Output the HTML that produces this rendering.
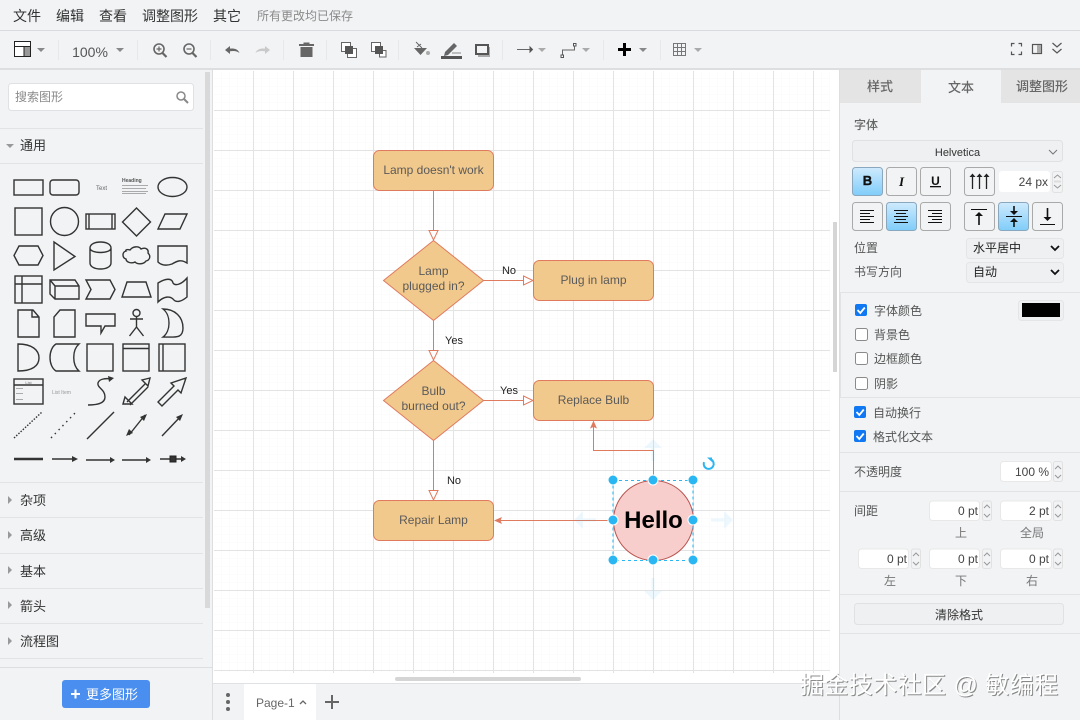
<!DOCTYPE html>
<html><head><meta charset="utf-8">
<style>
html,body{margin:0;padding:0;width:1080px;height:720px;overflow:hidden;background:#f1f3f4}
svg{position:absolute;left:0;top:0;display:block}
text{font-family:"Liberation Sans","Noto Sans CJK SC",sans-serif}
.m{font-size:14px;fill:#333}
.s{font-size:13px;fill:#333}
.l{font-size:12px;fill:#555}
.d{font-size:12px;fill:#5a5a5a;text-anchor:middle}
.e{font-size:11px;fill:#222;text-anchor:middle}
.n{font-size:12px;fill:#444;text-anchor:end}
.c{font-size:12px;fill:#777;text-anchor:middle}
.i{fill:#666}
.sh{fill:none;stroke:#333;stroke-width:1.4}
.line{fill:#e1e3e5}
.btn{fill:#f1f3f4;stroke:#a9a9a9;stroke-width:1}
.on{fill:url(#blue);stroke:#8aa8bd;stroke-width:1}
.inp{fill:#fff;stroke:#e8e8e8}
.sp{fill:#f1f3f4;stroke:#e1e1e1}
.cb{fill:#fff;stroke:#8a8a8a;stroke-width:1}
.cbon{fill:#0f78f2}
.edge{fill:none;stroke:#e07a5f;stroke-width:1}
.hov{fill:#29b6f2;opacity:.09}
.h{fill:#29b6f2;stroke:#fff;stroke-width:1}
</style></head>
<body>
<svg width="1080" height="720" viewBox="0 0 1080 720" xmlns="http://www.w3.org/2000/svg">
<defs>
<linearGradient id="blue" x1="0" y1="0" x2="0" y2="1"><stop offset="0" stop-color="#cfeafd"/><stop offset="1" stop-color="#7fcdfa"/></linearGradient>
<pattern id="minor" x="213" y="70" width="8" height="8" patternUnits="userSpaceOnUse"><path d="M.5 0V8M0 .5H8" fill="none" stroke="#fcfcfc" stroke-width="1"/></pattern>
<pattern id="major" x="213" y="70" width="40" height="40" patternUnits="userSpaceOnUse"><path d="M.5 0V40M0 .5H40" fill="none" stroke="#e3e3e3" stroke-width="1"/></pattern>
</defs>

<rect width="1080" height="720" fill="#f1f3f4"/>

<!-- canvas -->
<rect x="213" y="70" width="627" height="613" fill="#fff"/>
<rect x="213" y="70" width="617" height="603" fill="url(#minor)"/>
<rect x="213" y="70" width="617" height="603" fill="url(#major)"/>
<rect x="213" y="70" width="617" height="1" fill="#fff"/>
<rect x="213" y="70" width="1" height="603" fill="#fff"/>
<rect x="833" y="222" width="4" height="150" fill="#d5d5d5"/>
<rect x="395" y="677" width="186" height="4" rx="2" fill="#d5d5d5"/>

<!-- menu & toolbar -->
<rect y="30" width="1080" height="1" fill="#d8dadd"/>
<rect y="68" width="1080" height="2" fill="#dcdee0"/>
<text class="m" x="13" y="21">文件</text>
<text class="m" x="56" y="21">编辑</text>
<text class="m" x="99" y="21">查看</text>
<text class="m" x="142" y="21">调整图形</text>
<text class="m" x="213" y="21">其它</text>
<text x="257" y="20" font-size="12" fill="#8a8a8a">所有更改均已保存</text>

<g fill="#e6e8ea">
<rect x="58" y="40" width="1" height="20"/><rect x="137" y="40" width="1" height="20"/><rect x="210" y="40" width="1" height="20"/><rect x="283" y="40" width="1" height="20"/><rect x="326" y="40" width="1" height="20"/><rect x="398" y="40" width="1" height="20"/><rect x="502" y="40" width="1" height="20"/><rect x="603" y="40" width="1" height="20"/><rect x="660" y="40" width="1" height="20"/>
</g>
<!-- layout icon -->
<rect x="14.500" y="41.500" width="16" height="15" fill="#fff" stroke="#222"/>
<rect x="24" y="47" width="6" height="9" fill="#999"/>
<path d="M14 46.500H31M24 47V56" stroke="#222" fill="none"/>
<path d="M37 48h8l-4 4z" fill="#888"/>
<text x="90" y="57" font-size="14" fill="#555" text-anchor="middle">100%</text>
<path d="M116 48h8l-4 4z" fill="#888"/>
<!-- zoom icons -->
<g fill="none" stroke="#666" stroke-width="1.600">
<circle cx="159" cy="49" r="5"/><path d="M162.500 53l4 4" stroke-width="2.200"/><path d="M156.500 49h5M159 46.500v5" stroke-width="1.200"/>
<circle cx="189" cy="49" r="5"/><path d="M192.500 53l4 4" stroke-width="2.200"/><path d="M186.500 49h5" stroke-width="1.200"/>
</g>
<!-- undo/redo -->
<path d="M225 50l5-4v2.600c4.500-.4 8 .6 9.500 4.400-2.500-2-5.500-2.300-9.500-1.700V54z" fill="#666"/>
<path d="M270 50l-5-4v2.600c-4.500-.4-8 .6-9.500 4.400 2.500-2 5.500-2.300 9.500-1.700V54z" fill="#c9c9c9"/>
<!-- trash -->
<path d="M299 44h4.500v-1.500h6V44h4.500v2h-15zM300.500 47h12v10h-12z" fill="#666"/>
<!-- to front / back -->
<rect x="341.500" y="42.500" width="9" height="9" fill="#fff" stroke="#666"/><rect x="347.500" y="48.500" width="9" height="9" fill="#fff" stroke="#666"/><rect x="345" y="46" width="8" height="8" fill="#555"/>
<rect x="371.500" y="42.500" width="9" height="9" fill="#fff" stroke="#666"/><rect x="379.500" y="50.500" width="6.500" height="6.500" fill="#fff" stroke="#666"/><rect x="375" y="46" width="8" height="8" fill="#555"/>
<!-- fill -->
<path d="M414 48h13l-6.500 7z" fill="#666"/><path d="M416 42l6 6M417 47l4-3" stroke="#666" fill="none"/><circle cx="428" cy="53" r="2" fill="#aaa"/>
<!-- pen -->
<path d="M445 52l9-9 3 3-9 9-4 1z" fill="#666"/><rect x="452" y="52.500" width="9" height="1" fill="#888"/><rect x="441" y="56" width="21" height="3" fill="#555"/>
<!-- shadow -->
<rect x="478" y="47" width="12" height="10" fill="#aaa"/><rect x="476" y="45" width="12" height="9" fill="#f1f3f4" stroke="#555" stroke-width="2"/>
<!-- connection -->
<path d="M517 49.500H531" stroke="#666" fill="none"/><path d="M530 47l2.500 2.500-2.500 2.500z" fill="#555" stroke="#555"/>
<path d="M538 48h8l-4 4z" fill="#aaa"/>
<path d="M562.500 55.500V50H574.500V45.500" stroke="#666" fill="none"/><rect x="561" y="55" width="2.500" height="2.500" fill="#fff" stroke="#555"/><rect x="573.500" y="43.500" width="2.500" height="2.500" fill="#fff" stroke="#555"/>
<path d="M582 48h8l-4 4z" fill="#aaa"/>
<!-- plus -->
<path d="M618 48h5v-5h3v5h5v3h-5v5h-3v-5h-5z" fill="#000"/>
<path d="M639 48h8l-4 4z" fill="#888"/>
<!-- table -->
<g fill="none" stroke="#777"><rect x="673.500" y="43.500" width="12" height="12"/><path d="M677.500 43.500v12M681.500 43.500v12M673.500 47.500h12M673.500 51.500h12"/></g>
<path d="M694 48h8l-4 4z" fill="#aaa"/>
<!-- right icons -->
<g fill="none" stroke="#555" stroke-width="1.200">
<path d="M1011.500 46.500v-3h3M1018.500 43.500h3v3M1021.500 51.500v3h-3M1014.500 54.500h-3v-3"/>
<rect x="1032.500" y="44.500" width="9" height="9"/>
<path d="M1052.500 43l4.500 4 4.500-4M1052.500 49l4.500 4 4.500-4"/>
</g>
<rect x="1037" y="45" width="4" height="8" fill="#aaa"/>

<!-- left sidebar -->
<rect x="212" y="70" width="1" height="650" fill="#dcdee0"/>
<rect x="205" y="72" width="5" height="536" fill="#d9d9d9"/>
<rect x="8.500" y="83.500" width="185" height="27" rx="3" fill="#fff" stroke="#dfe1e4"/>
<text x="15" y="101" font-size="12" fill="#8a8a8a">搜索图形</text>
<circle cx="181" cy="96" r="4" fill="none" stroke="#888" stroke-width="1.500"/><path d="M184 99l4 4" stroke="#888" stroke-width="2"/>
<rect y="128" width="203" height="1" class="line"/>
<rect y="163" width="203" height="1" class="line"/>
<path d="M6 144h8l-4 4z" fill="#999"/>
<text class="s" x="20" y="150">通用</text>

<!-- shapes -->
<g class="sh">
<rect x="14" y="180" width="29" height="15"/>
<rect x="50" y="180" width="29" height="15" rx="3"/>
<ellipse cx="172.500" cy="187" rx="14.500" ry="9.500"/>
<rect x="15" y="208" width="27" height="27"/>
<circle cx="64.500" cy="221.500" r="14"/>
<rect x="86" y="214" width="29" height="15"/><path d="M89 214v15M112 214v15"/>
<path d="M136.500 208l14 14-14 14-14-14z"/>
<path d="M165 214h22l-7 15h-22z"/>
<path d="M19 246h19l5 9.500-5 9.500H19l-5-9.500z"/>
<path d="M54 242l21 14.500L54 270z"/>
<path d="M90 248c0-8 21-8 21 0v15c0 8-21 8-21 0zM90 248c0 6 21 6 21 0"/>
<path d="M130 250c3-4 9-4 11-1 4-2 8 0 7 4 3 3 2 7-2 8-2 3-8 4-11 1-4 2-9 0-9-3-4-1-4-7 0-8-1-1 1-2 4-1z"/>
<path d="M158 246h29v17c-6-4-10-2-15 1-6 2-11 1-14-2z"/>
<rect x="15" y="276" width="27" height="27"/><path d="M22 276v27M15 284h27"/>
<path d="M50 280h25l4 6v13H55l-5-5zM50 280l5 6h24M55 286v13"/>
<path d="M86 280h24l5 9.500-5 9.500H86l5-9.500z"/>
<path d="M127 282h19l5 15h-29z"/>
<path d="M158 283c8-5 14-5 15 0 2 3 8 2 14-5v19c-6 5-11 6-14 2-3-3-9-3-15 3z"/>
<path d="M18 310h15l6 7v20H18zM32 310v7h7"/>
<path d="M60 310h15v27H54v-20z"/>
<path d="M86 314h29v12h-10l-4 7 0-7H86z"/>
<circle cx="136.500" cy="313" r="3.500"/><path d="M136.500 316.500V327M130 319h13M136.500 327l-7 9M136.500 327l7 9"/>
<path d="M163 309c12 0 20 8 20 19s-8 9-20 9c8-6 8-22 0-28z"/>
<path d="M18 344c14 0 21 6 21 14s-7 13-21 13z"/>
<path d="M56 344h23c-7 6-7 21 0 27H56c-8-5-8-22 0-27z"/>
<rect x="87" y="344" width="26" height="27"/>
<rect x="123" y="344" width="26" height="27"/><path d="M123 348.500h26"/>
<rect x="159" y="344" width="26" height="27"/><path d="M163 344v27"/>
<rect x="14" y="379" width="29" height="25"/><path d="M14 385h29"/>
<path d="M88 405c8 0 17-1 17-8 0-8-8-9-7-14 1-4 7-5 14-4"/>
<path d="M127 402l18-18M130 405l18-18M123 404l2-7 7 7zM150 378l-8 2 6 6z" />
<path d="M158 402l16-16-3-3 15-5-5 15-3-3-16 16z"/>
<path d="M14 438l28-26" stroke-dasharray="1.500 1.500"/>
<path d="M51 438l25-26" stroke-dasharray="1.500 4"/>
<path d="M87 439l27-27"/>
<path d="M129 435l16-20"/>
<path d="M162 436l19-20"/>
<path d="M14 459h29" stroke-width="2.400"/>
<path d="M52 459h24"/>
<path d="M86 460h27"/>
<path d="M122 460h27"/>
<path d="M160 459h24"/>
</g>
<g fill="#333">
<path d="M114 378l-6-2 1 6zM126 436l7-3-4-4zM147 414l-7 3 4 4zM183 414l-7 3 4 4zM78 459l-6-3v6zM115 460l-5-3v6zM151 460l-5-3v6zM186 459l-5-3v6z"/>
<rect x="170" y="456" width="6" height="6" stroke="#222"/>
</g>
<text x="96" y="190" font-size="6" fill="#666">Text</text>
<text x="122" y="182" font-size="5" font-weight="bold" fill="#555">Heading</text>
<g fill="#aaa"><rect x="122" y="185" width="26" height="1"/><rect x="122" y="188" width="24" height="1"/><rect x="122" y="191" width="26" height="1"/><rect x="122" y="193" width="24" height="1"/></g>
<text x="52" y="394" font-size="5" fill="#999">List Item</text>
<text x="28.500" y="384" font-size="4" fill="#777" text-anchor="middle">List</text>
<g fill="#aaa"><rect x="16" y="388" width="7" height="1"/><rect x="16" y="393" width="7" height="1"/><rect x="16" y="399" width="7" height="1"/></g>

<!-- categories -->
<rect y="482" width="203" height="1" class="line"/>
<rect y="517" width="203" height="1" class="line"/>
<rect y="553" width="203" height="1" class="line"/>
<rect y="588" width="203" height="1" class="line"/>
<rect y="623" width="203" height="1" class="line"/>
<rect y="658" width="203" height="1" class="line"/>
<g fill="#999">
<path d="M8 496l4 4-4 4zM8 531l4 4-4 4zM8 566l4 4-4 4zM8 601l4 4-4 4zM8 637l4 4-4 4z"/>
</g>
<text class="s" x="20" y="505">杂项</text>
<text class="s" x="20" y="540">高级</text>
<text class="s" x="20" y="576">基本</text>
<text class="s" x="20" y="611">箭头</text>
<text class="s" x="20" y="646">流程图</text>
<rect y="667" width="212" height="53" fill="#f1f3f4"/>
<rect y="667" width="212" height="1" fill="#dcdee0"/>
<rect x="62" y="680" width="88" height="28" rx="3" fill="#4a8ff0"/>
<path d="M71 694h9M75.500 689.500v9" stroke="#fff" stroke-width="2" fill="none"/>
<text x="86" y="699" font-size="13" fill="#fff">更多图形</text>

<!-- page tabs -->
<rect x="213" y="683" width="627" height="37" fill="#f1f3f4"/>
<rect x="213" y="683" width="627" height="1" fill="#dfe1e4"/>
<rect x="244" y="684" width="72" height="36" fill="#fff"/>
<g fill="#666"><circle cx="228" cy="695" r="2"/><circle cx="228" cy="702" r="2"/><circle cx="228" cy="709" r="2"/></g>
<text x="256" y="707" font-size="12" fill="#666">Page-1</text>
<path d="M300 704l3-3 3 3" fill="none" stroke="#666" stroke-width="1.300"/>
<path d="M332 695v14M325 702h14" stroke="#666" stroke-width="2" fill="none"/>

<!-- diagram -->
<g fill="#f2c98c" stroke="#e07a5f">
<rect x="373.500" y="150.500" width="120" height="40" rx="6"/>
<path d="M433.500 240.500l50 40-50 40-50-40z"/>
<rect x="533.500" y="260.500" width="120" height="40" rx="6"/>
<path d="M433.500 360.500l50 40-50 40-50-40z"/>
<rect x="533.500" y="380.500" width="120" height="40" rx="6"/>
<rect x="373.500" y="500.500" width="120" height="40" rx="6"/>
</g>
<path class="edge" d="M433.500 190.500V230M483.500 280.500H523M433.500 320.500V350M483.500 400.500H523M433.500 440.500V490M613 520.500H500M653.500 480V450.500H593.500V427"/>
<g fill="#fff" stroke="#e07a5f">
<path d="M429 230.500h9l-4.500 9.500z"/>
<path d="M523.500 276l9.500 4.500-9.500 4.500z"/>
<path d="M429 350.500h9l-4.500 9.500z"/>
<path d="M523.500 396l9.500 4.500-9.500 4.500z"/>
<path d="M429 490.500h9l-4.500 9.500z"/>
</g>
<g fill="#e07a5f">
<path d="M494 520.500l8-3.500-1.500 3.500 1.500 3.500z"/>
<path d="M593.500 420.500l3.500 8-3.500-1.500-3.500 1.500z"/>
</g>
<text class="d" x="433.500" y="174">Lamp doesn't work</text>
<text class="d" x="433.500" y="275">Lamp</text>
<text class="d" x="433.500" y="290">plugged in?</text>
<text class="d" x="593.500" y="284">Plug in lamp</text>
<text class="d" x="433.500" y="395">Bulb</text>
<text class="d" x="433.500" y="410">burned out?</text>
<text class="d" x="593.500" y="404">Replace Bulb</text>
<text class="d" x="433.500" y="524">Repair Lamp</text>
<text class="e" x="509" y="274">No</text>
<text class="e" x="454" y="344">Yes</text>
<text class="e" x="509" y="394">Yes</text>
<text class="e" x="454" y="484">No</text>
<circle cx="653.500" cy="520.500" r="40" fill="#f8cecc" stroke="#b85450"/>
<text x="653.500" y="528" font-size="24" font-weight="bold" fill="#000" text-anchor="middle">Hello</text>
<!-- hover arrows -->
<path class="hov" d="M653 439l9 9h-7.500v13h-3v-13h-7.500z"/>
<path class="hov" d="M653 600l9-9h-7.500v-13h-3v13h-7.500z"/>
<path class="hov" d="M574 520l9-9v7.500h13v3h-13v7.500z"/>
<path class="hov" d="M733 520l-9-9v7.500h-13v3h13v7.500z"/>
<!-- selection -->
<rect x="613" y="480.500" width="80" height="80" fill="none" stroke="#29b6f2" stroke-dasharray="3 3"/>
<circle class="h" cx="613" cy="480" r="5"/><circle class="h" cx="653" cy="480" r="5"/><circle class="h" cx="693" cy="480" r="5"/>
<circle class="h" cx="613" cy="520" r="5"/><circle class="h" cx="693" cy="520" r="5"/>
<circle class="h" cx="613" cy="560" r="5"/><circle class="h" cx="653" cy="560" r="5"/><circle class="h" cx="693" cy="560" r="5"/>
<path d="M705 460.500a5 5 0 1 0 7.500 0" fill="none" stroke="#29b6f2" stroke-width="2" transform="rotate(-20 709 464)"/>
<path d="M707 457.500h5v4.500z" fill="#29b6f2"/>

<!-- right panel -->
<rect x="839" y="70" width="241" height="650" fill="#f1f3f4"/>
<rect x="839" y="70" width="1" height="650" fill="#dcdee0"/>
<rect x="840" y="70" width="81" height="33" fill="#e4e4e4"/>
<rect x="1001" y="70" width="79" height="33" fill="#e4e4e4"/>
<text x="880" y="91" font-size="13" font-weight="500" fill="#666" text-anchor="middle">样式</text>
<text x="961" y="92" font-size="13" font-weight="500" fill="#666" text-anchor="middle">文本</text>
<text x="1042" y="91" font-size="13" font-weight="500" fill="#666" text-anchor="middle">调整图形</text>
<text x="854" y="129" font-size="12" font-weight="500" fill="#666">字体</text>
<rect x="852.500" y="140.500" width="210" height="21" rx="3" fill="#eef0f1" stroke="#dfe1e3"/>
<text x="957.500" y="156" font-size="11" fill="#333" text-anchor="middle">Helvetica</text>
<path d="M1049 150l4 4 4-4" fill="none" stroke="#777"/>

<rect class="on" x="852.500" y="167.500" width="30" height="28" rx="3"/>
<rect class="btn" x="886.500" y="167.500" width="30" height="28" rx="3"/>
<rect class="btn" x="920.500" y="167.500" width="30" height="28" rx="3"/>
<rect class="btn" x="964.500" y="167.500" width="30" height="28" rx="3"/>
<text x="867.500" y="185" font-size="13" font-weight="bold" fill="#111" text-anchor="middle" stroke="#111" stroke-width=".4">B</text>
<text x="901.500" y="186" font-size="13" font-weight="bold" font-style="italic" fill="#111" text-anchor="middle" style="font-family:'Liberation Serif',serif">I</text>
<text x="935.500" y="185" font-size="12" font-weight="bold" fill="#111" text-anchor="middle">U</text>
<rect x="930" y="186" width="11" height="1.300" fill="#111"/>
<g stroke="#222" fill="none" stroke-width="1.300"><path d="M972.500 175v14M979.500 175v14M986.500 175v14"/></g>
<path d="M969.500 177l3-3.500 3 3.500zM976.500 177l3-3.500 3 3.500zM983.500 177l3-3.500 3 3.500z" fill="#222"/>
<rect x="999" y="171" width="51" height="21" rx="3" fill="#fff"/>
<text class="n" x="1048" y="186">24 px</text>
<rect class="sp" x="1052.500" y="171.500" width="10" height="21" rx="2"/>
<path d="M1054 178l3.500-3 3.500 3M1054 185l3.500 3 3.500-3" fill="none" stroke="#999"/>
<path d="M1054 181h7M1054 182h7" stroke="#ddd" fill="none"/>

<rect class="btn" x="852.500" y="202.500" width="30" height="28" rx="3"/>
<rect class="on" x="886.500" y="202.500" width="30" height="28" rx="3"/>
<rect class="btn" x="920.500" y="202.500" width="30" height="28" rx="3"/>
<rect class="btn" x="964.500" y="202.500" width="30" height="28" rx="3"/>
<rect class="on" x="998.500" y="202.500" width="30" height="28" rx="3"/>
<rect class="btn" x="1032.500" y="202.500" width="30" height="28" rx="3"/>
<g stroke="#111" fill="none" stroke-width="1">
<path d="M860 210.500h14M860 213.500h10M860 216.500h14M860 219.500h10M860 222.500h14"/>
<path d="M894 210.500h14M896 213.500h10M894 216.500h14M896 219.500h10M894 222.500h14"/>
<path d="M928 210.500h14M932 213.500h10M928 216.500h14M932 219.500h10M928 222.500h14"/>
<path d="M971 209.500h16M1006 216.500h16M1040 224.500h15"/>
</g>
<g stroke="#111" fill="none" stroke-width="1.600"><path d="M979 215v10M1014 206v6M1014 221v6M1047.500 208v10"/></g>
<g fill="#111">
<path d="M975 216l4-4 4 4zM1010 211h8l-4 4zM1010 222l4-4 4 4zM1043.500 217h8l-4 4z"/>
</g>

<text class="l" x="854" y="252">位置</text>
<rect x="966.500" y="238.500" width="97" height="20" rx="3" fill="#eef0f1" stroke="#e3e5e6"/>
<text x="973" y="252" font-size="12" fill="#222">水平居中</text>
<path d="M1051 246l4 4 4-4" fill="none" stroke="#111" stroke-width="1.800"/>
<text class="l" x="854" y="276">书写方向</text>
<rect x="966.500" y="262.500" width="97" height="20" rx="3" fill="#eef0f1" stroke="#e3e5e6"/>
<text x="973" y="276" font-size="12" fill="#222">自动</text>
<path d="M1051 270l4 4 4-4" fill="none" stroke="#111" stroke-width="1.800"/>

<rect x="840" y="292" width="240" height="1" class="line"/>
<rect x="840" y="397" width="240" height="1" class="line"/>
<rect x="840" y="293" width="1" height="104" class="line"/>
<rect x="855" y="304" width="12" height="12" rx="2" class="cbon"/>
<path d="M857.500 310l2.800 3 4.500-5.500" fill="none" stroke="#fff" stroke-width="1.800"/>
<rect x="855.500" y="328.500" width="12" height="12" rx="2" class="cb"/>
<rect x="855.500" y="352.500" width="12" height="12" rx="2" class="cb"/>
<rect x="855.500" y="377.500" width="12" height="12" rx="2" class="cb"/>
<text class="l" x="874" y="315">字体颜色</text>
<text class="l" x="874" y="339">背景色</text>
<text class="l" x="874" y="363">边框颜色</text>
<text class="l" x="874" y="388">阴影</text>
<rect x="1018.500" y="300.500" width="45" height="20" rx="3" fill="#eef0f1" stroke="#e3e5e6"/>
<rect x="1022" y="303" width="38" height="14" fill="#000"/>

<rect x="854" y="406" width="12" height="12" rx="2" class="cbon"/>
<path d="M856.500 412l2.800 3 4.500-5.500" fill="none" stroke="#fff" stroke-width="1.800"/>
<rect x="854" y="430" width="12" height="12" rx="2" class="cbon"/>
<path d="M856.500 436l2.800 3 4.500-5.500" fill="none" stroke="#fff" stroke-width="1.800"/>
<text class="l" x="873" y="417">自动换行</text>
<text class="l" x="873" y="441">格式化文本</text>
<rect x="840" y="452" width="240" height="1" class="line"/>

<text class="l" x="854" y="476">不透明度</text>
<rect class="inp" x="1000.500" y="461.500" width="51" height="20" rx="3"/>
<text class="n" x="1049" y="476">100 %</text>
<g id="sp1">
<rect class="sp" x="1053.500" y="461.500" width="9" height="20" rx="2"/>
<path d="M1055 469l3-3 3 3M1055 475l3 3 3-3" fill="none" stroke="#999"/>
</g>
<rect x="840" y="491" width="240" height="1" class="line"/>

<text class="l" x="854" y="515">间距</text>
<rect class="inp" x="929.500" y="501" width="50" height="19.500" rx="3"/>
<rect class="inp" x="1000.500" y="501" width="51" height="19.500" rx="3"/>
<rect class="inp" x="858.500" y="549" width="50" height="19.500" rx="3"/>
<rect class="inp" x="929.500" y="549" width="50" height="19.500" rx="3"/>
<rect class="inp" x="1000.500" y="549" width="51" height="19.500" rx="3"/>
<text class="n" x="978" y="515">0 pt</text>
<text class="n" x="1049" y="515">2 pt</text>
<text class="n" x="907" y="563">0 pt</text>
<text class="n" x="978" y="563">0 pt</text>
<text class="n" x="1049" y="563">0 pt</text>
<g class="sp">
<rect x="982.500" y="501" width="9" height="19.500" rx="2"/>
<rect x="1053.500" y="501" width="9" height="19.500" rx="2"/>
<rect x="911.500" y="549" width="9" height="19.500" rx="2"/>
<rect x="982.500" y="549" width="9" height="19.500" rx="2"/>
<rect x="1053.500" y="549" width="9" height="19.500" rx="2"/>
</g>
<g fill="none" stroke="#999">
<path d="M984 508l3-3 3 3M984 514l3 3 3-3"/>
<path d="M1055 508l3-3 3 3M1055 514l3 3 3-3"/>
<path d="M913 556l3-3 3 3M913 562l3 3 3-3"/>
<path d="M984 556l3-3 3 3M984 562l3 3 3-3"/>
<path d="M1055 556l3-3 3 3M1055 562l3 3 3-3"/>
</g>
<text class="c" x="961" y="537">上</text>
<text class="c" x="1032" y="537">全局</text>
<text class="c" x="890" y="585">左</text>
<text class="c" x="961" y="585">下</text>
<text class="c" x="1032" y="585">右</text>
<rect x="840" y="594" width="240" height="1" class="line"/>
<rect x="854.500" y="603.500" width="209" height="21" rx="3" fill="#eef0f1" stroke="#dfe1e3"/>
<text x="959" y="619" font-size="12" fill="#333" text-anchor="middle">清除格式</text>
<rect x="840" y="633" width="240" height="1" class="line"/>

<!-- watermark -->
<text x="801" y="694" font-size="24" letter-spacing=".4" fill="#666" opacity=".75">掘金技术社区 @ 敏编程</text>
<text x="800" y="693" font-size="24" letter-spacing=".4" fill="#fff">掘金技术社区 @ 敏编程</text>
</svg>
</body></html>
